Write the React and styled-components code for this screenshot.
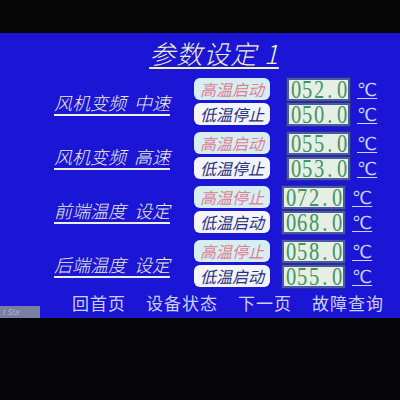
import React from 'react'
import styled, { createGlobalStyle } from 'styled-components'

const Global = createGlobalStyle`
    html, body {
        margin: 0;
        padding: 0;
        background: #060608;
    }
    body {
        width: 400px;
        height: 400px;
        overflow: hidden;
        font-family: "Noto Sans CJK SC", "Noto Sans", sans-serif;
    }
`

const groups = [
    { label: '风机变频  中速', rows: [['高温启动', '052.0'], ['低温停止', '050.0']], valueLeft: 0 },
    { label: '风机变频  高速', rows: [['高温启动', '055.0'], ['低温停止', '053.0']], valueLeft: 0 },
    { label: '前端温度  设定', rows: [['高温停止', '072.0'], ['低温启动', '068.0']], valueLeft: -5 },
    { label: '后端温度  设定', rows: [['高温停止', '058.0'], ['低温启动', '055.0']], valueLeft: -5 },
]

const App = () => {
    return (
        <>
            <Global />
            <TopBezel />
            <Screen>
                <Title>参数设定 1</Title>
                <Groups>
                    {groups.map((g, gi) => (
                        <Group key={gi}>
                            <Label>{g.label}</Label>
                            <Pairs>
                                {g.rows.map(([btn, val], ri) => (
                                    <Row key={ri}>
                                        <Button high={ri == 0}>{btn}</Button>
                                        <Value shift={g.valueLeft}>
                                            {val.split('').map((c, ci) => <Cell key={ci}>{c}</Cell>)}
                                        </Value>
                                        <Unit>℃</Unit>
                                    </Row>
                                ))}
                            </Pairs>
                        </Group>
                    ))}
                </Groups>
                <Nav>
                    <StatusTag>t Sta</StatusTag>
                    <NavItem>回首页</NavItem>
                    <NavItem>设备状态</NavItem>
                    <NavItem>下一页</NavItem>
                    <NavItem>故障查询</NavItem>
                </Nav>
            </Screen>
        </>
    )
}

export default App

const TopBezel = styled.div`
    height: 33px;
    background: #050506;
`

const Screen = styled.div`
    height: 285px;
    background: #1b15d6;
    display: flex;
    flex-direction: column;
`

const Title = styled.div`
    align-self: center;
    margin: 4px 0 0 28px;
    height: 32px;
    line-height: 32px;
    font-size: 26px;
    font-weight: 300;
    font-style: italic;
    color: #f2f0c4;
    text-decoration: underline;
    text-decoration-thickness: 2px;
    text-underline-offset: 3px;
    letter-spacing: 1px;
    white-space: pre;
`

const Groups = styled.div`
    display: flex;
    flex-direction: column;
    gap: 7px;
    margin-top: 9px;
`

const Group = styled.div`
    display: flex;
    align-items: center;
`

const Label = styled.div`
    width: 140px;
    padding-left: 54px;
    font-size: 18px;
    font-weight: 300;
    font-style: italic;
    color: #efeed8;
    white-space: pre;
    text-decoration: underline;
    text-decoration-thickness: 2px;
    text-underline-offset: 4px;
`

const Pairs = styled.div`
    display: flex;
    flex-direction: column;
    gap: 3px;
`

const Row = styled.div`
    display: flex;
    align-items: center;
    height: 22px;
`

const Button = styled.div`
    width: 76px;
    height: 22px;
    box-sizing: border-box;
    border-radius: 6px;
    display: flex;
    align-items: center;
    justify-content: center;
    font-size: 16px;
    font-style: italic;
    background: ${p => p.high ? '#d6eef2' : '#f3f3fa'};
    color: ${p => p.high ? '#e27c92' : '#27307e'};
`

const Value = styled.div`
    margin-left: ${p => 17 + p.shift}px;
    width: 63px;
    height: 23px;
    box-sizing: border-box;
    border: 2px solid #4a5aa6;
    outline: 1px solid #2a2a90;
    background: #e6efe4;
    display: flex;
    align-items: center;
    justify-content: center;
`

const Cell = styled.span`
    display: inline-block;
    width: 11.5px;
    text-align: center;
    font-family: "Liberation Serif", serif;
    font-size: 25px;
    line-height: 19px;
    color: #449363;
    transform: scaleX(0.82);
`

const Unit = styled.div`
    margin-left: 7px;
    font-family: "DejaVu Sans", sans-serif;
    font-size: 18px;
    color: #cdd3f4;
    text-decoration: underline;
    text-underline-offset: 2px;
`

const Nav = styled.div`
    margin-top: auto;
    display: flex;
    align-items: center;
    gap: 20px;
    height: 34px;
`

const StatusTag = styled.div`
    align-self: flex-end;
    width: 40px;
    height: 12px;
    margin-right: 12px;
    background: #787fa2;
    color: #b0b4c8;
    font-size: 8px;
    font-style: italic;
    line-height: 12px;
    padding-left: 2px;
    box-sizing: border-box;
`

const NavItem = styled.div`
    font-size: 17px;
    color: #ccd0f2;
    letter-spacing: 1px;
`
